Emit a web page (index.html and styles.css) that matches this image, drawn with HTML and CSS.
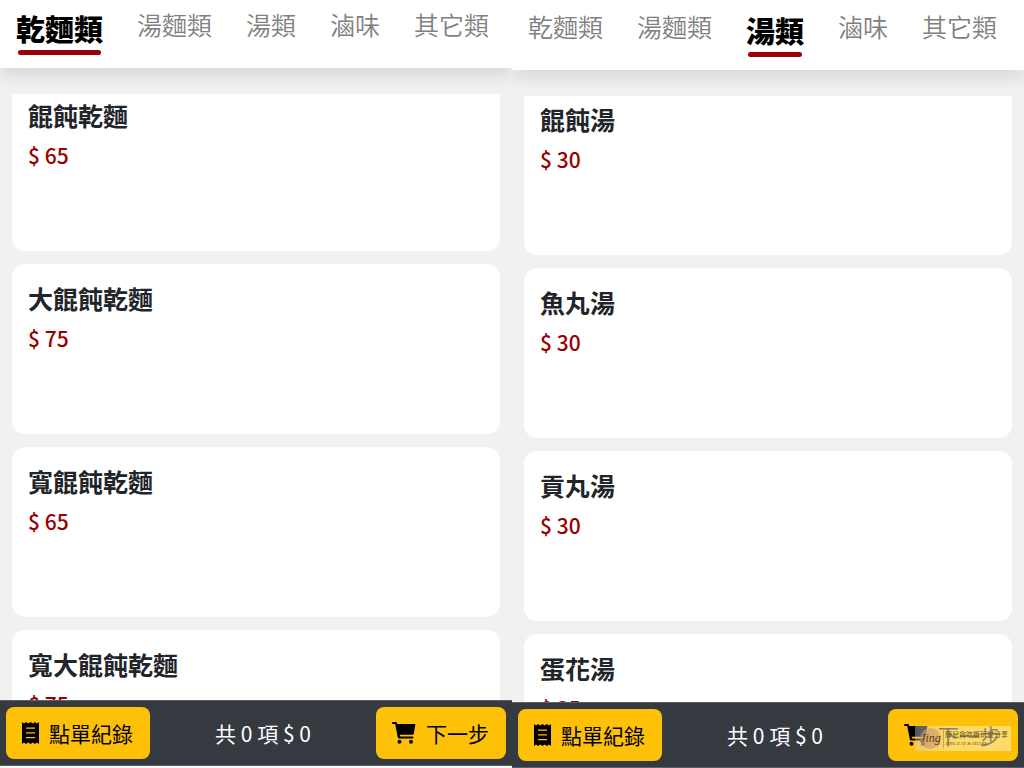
FILE: index.html
```html
<!DOCTYPE html>
<html lang="zh-Hant">
<head>
    <meta charset="UTF-8">
    <meta name="viewport" content="width=device-width, initial-scale=1.0">
    <title>點餐</title>
    <link rel="stylesheet" href="styles.css">
</head>
<body>
    <section class="screen">
        <nav class="tabs">
            <a href="#" class="tab active">乾麵類</a>
            <a href="#" class="tab">湯麵類</a>
            <a href="#" class="tab">湯類</a>
            <a href="#" class="tab">滷味</a>
            <a href="#" class="tab">其它類</a>
        </nav>
        <main class="menu">
            <div class="menu-list">
                <article class="item">
                    <h2>餛飩乾麵</h2>
                    <p class="price">$ 65</p>
                </article>
                <article class="item">
                    <h2>大餛飩乾麵</h2>
                    <p class="price">$ 75</p>
                </article>
                <article class="item">
                    <h2>寬餛飩乾麵</h2>
                    <p class="price">$ 65</p>
                </article>
                <article class="item">
                    <h2>寬大餛飩乾麵</h2>
                    <p class="price">$ 75</p>
                </article>
            </div>
        </main>
        <footer class="order-bar">
            <button type="button" class="btn">
                <svg class="icon-receipt" viewBox="0 0 17 22" aria-hidden="true">
                    <path fill-rule="evenodd" d="M0 0l2 1.5L4 0l2.200 1.500L8.500 0l2.300 1.500L13 0l2 1.500L17 0v22l-2-1.500-2 1.500-2.200-1.500L8.500 22l-2.300-1.500L4 22l-2-1.500L0 22zM4 5.500v1.200h9V5.500zM4 10.300v1.200h9v-1.200zM4 15v1.200h9V15z"/>
                </svg>
                <span>點單紀錄</span>
            </button>
            <span class="total">共 0 項 $ 0</span>
            <button type="button" class="btn btn-next">
                <svg class="icon-cart" viewBox="0 0 24 22" aria-hidden="true">
                    <path d="M.8 0H4q.8 0 1 .8l.3 1.200H22.500q1 0 .8 1L21.800 11.500q-.2 1.200-1.300 1.200H7.700l.4 1.800H20.500q1 0 1 1t-1 1H7q-1 0-1.200-1L3.200 2H.8q-.8 0-.8-1t.8-1z"/>
                    <circle cx="7.500" cy="19.700" r="2"/>
                    <circle cx="19" cy="19.700" r="2"/>
                </svg>
                <span>下一步</span>
            </button>
        </footer>
    </section>

    <section class="screen screen-soup">
        <nav class="tabs">
            <a href="#" class="tab">乾麵類</a>
            <a href="#" class="tab">湯麵類</a>
            <a href="#" class="tab active">湯類</a>
            <a href="#" class="tab">滷味</a>
            <a href="#" class="tab">其它類</a>
        </nav>
        <main class="menu">
            <div class="menu-list">
                <article class="item">
                    <h2>餛飩湯</h2>
                    <p class="price">$ 30</p>
                </article>
                <article class="item">
                    <h2>魚丸湯</h2>
                    <p class="price">$ 30</p>
                </article>
                <article class="item">
                    <h2>貢丸湯</h2>
                    <p class="price">$ 30</p>
                </article>
                <article class="item">
                    <h2>蛋花湯</h2>
                    <p class="price">$ 35</p>
                </article>
            </div>
        </main>
        <footer class="order-bar">
            <button type="button" class="btn">
                <svg class="icon-receipt" viewBox="0 0 17 22" aria-hidden="true">
                    <path fill-rule="evenodd" d="M0 0l2 1.5L4 0l2.200 1.500L8.500 0l2.300 1.500L13 0l2 1.500L17 0v22l-2-1.500-2 1.500-2.200-1.500L8.500 22l-2.300-1.500L4 22l-2-1.500L0 22zM4 5.500v1.200h9V5.500zM4 10.300v1.200h9v-1.200zM4 15v1.200h9V15z"/>
                </svg>
                <span>點單紀錄</span>
            </button>
            <span class="total">共 0 項 $ 0</span>
            <button type="button" class="btn btn-next">
                <svg class="icon-cart" viewBox="0 0 24 22" aria-hidden="true">
                    <path d="M.8 0H4q.8 0 1 .8l.3 1.200H22.500q1 0 .8 1L21.800 11.500q-.2 1.200-1.300 1.200H7.700l.4 1.800H20.500q1 0 1 1t-1 1H7q-1 0-1.200-1L3.200 2H.8q-.8 0-.8-1t.8-1z"/>
                    <circle cx="7.500" cy="19.700" r="2"/>
                    <circle cx="19" cy="19.700" r="2"/>
                </svg>
                <span>下一步</span>
            </button>
            <div class="watermark">
                <span class="mark-logo">Jing</span>
                <span class="mark-text">
                    <span>靜兒貪吃遊玩愛分享</span>
                    <em>JING EAT &amp; SHARE</em>
                </span>
            </div>
        </footer>
    </section>
</body>
</html>
```
FILE: styles.css
```css
* {
    box-sizing: border-box;
}

body {
    margin: 0;
    display: flex;
    height: 100vh;
    overflow: hidden;
    background: #f8f8fc;
    font-family: "Noto Sans CJK TC", sans-serif;
    color: #212529;
}

.screen {
    flex: 1;
    min-width: 0;
    display: flex;
    flex-direction: column;
    padding-bottom: 2px;
}

.screen-soup {
    padding-bottom: 0;
}

/* category tabs */
.tabs {
    display: flex;
    align-items: flex-start;
    gap: 34px;
    padding: 7px 16px 13px;
    background: #fff;
    white-space: nowrap;
    box-shadow: 0 8px 16px rgba(0, 0, 0, 0.1);
    clip-path: inset(0 0 -30px 0);
    z-index: 1;
}

.screen-soup .tabs {
    padding-top: 9px;
}

.tab {
    font-size: 25px;
    font-weight: 350;
    line-height: 34px;
    color: #808080;
    text-decoration: none;
}

.tab.active {
    font-size: 29px;
    font-weight: 900;
    line-height: 43px;
    color: #000;
}

.tab.active::after {
    content: "";
    display: block;
    height: 5px;
    margin: 0 2px;
    border-radius: 3px;
    background: #990007;
}

/* menu items */
.menu {
    flex: 1;
    min-height: 0;
    padding: 26px 12px 0;
    background: #f1f1f1;
}

.menu-list {
    height: 100%;
    overflow: hidden;
}

.item {
    height: 170px;
    margin-bottom: 13px;
    padding: 17px 16px;
    border-radius: 13px;
    background: #fff;
}

/* the list is scrolled a little, so the first card is cut off */
.item:first-child {
    height: 157px;
    padding-top: 4px;
    border-radius: 0 0 13px 13px;
}

.screen-soup .item:first-child {
    height: 159px;
    padding-top: 6px;
}

.item h2 {
    margin: 0 0 7px;
    font-size: 25px;
    font-weight: 700;
    line-height: 35px;
}

.price {
    margin: 0;
    font-size: 21px;
    font-weight: 500;
    line-height: 30px;
    color: #990000;
}

/* bottom bar */
.order-bar {
    position: relative;
    display: flex;
    justify-content: space-between;
    align-items: center;
    height: 66px;
    padding: 0 6px;
    border-top: 1px solid #5d6166;
    border-bottom: 1px solid #5d6166;
    background: #343a40;
}

.btn {
    display: flex;
    align-items: center;
    gap: 10px;
    height: 52px;
    padding: 0 17px 0 16px;
    border: none;
    border-radius: 8px;
    background: #ffc107;
    color: #000;
    font-family: inherit;
    font-size: 21px;
    line-height: 30px;
    cursor: pointer;
}

.icon-receipt {
    width: 17px;
    height: 22px;
}

.icon-cart {
    width: 24px;
    height: 22px;
}

.total {
    color: #fff;
    font-size: 21px;
    line-height: 30px;
    white-space: nowrap;
}

.watermark {
    position: absolute;
    right: 13px;
    bottom: 16px;
    display: flex;
    align-items: center;
    gap: 2px;
    width: 96px;
    height: 25px;
    padding-left: 5px;
    background: linear-gradient(90deg, rgba(215, 215, 235, 0.4), rgba(255, 240, 190, 0.55) 40%);
    color: #6b531c;
    white-space: nowrap;
    overflow: hidden;
}

.mark-logo {
    width: 21px;
    height: 21px;
    border-radius: 50%;
    background: rgba(205, 150, 110, 0.6);
    color: #54401c;
    font-family: "Liberation Serif", serif;
    font-size: 12px;
    font-style: italic;
    line-height: 21px;
    text-align: center;
}

.mark-text {
    display: flex;
    flex-direction: column;
    padding-left: 1px;
    border-left: 1px solid #c9a54a;
    font-size: 7px;
    line-height: 11px;
}

.mark-text em {
    font-family: "Liberation Serif", serif;
    font-size: 5px;
    line-height: 8px;
}
```
